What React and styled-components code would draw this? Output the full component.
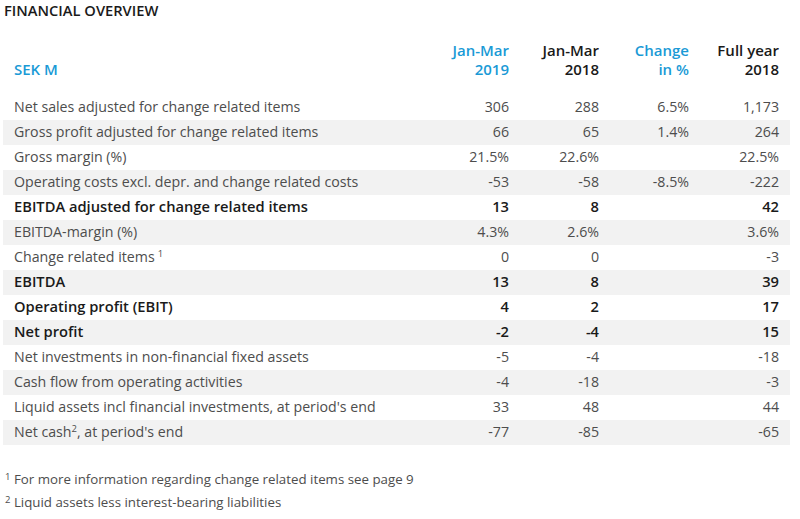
import styled, { createGlobalStyle } from "styled-components";

const GlobalStyle = createGlobalStyle`
  html, body {
    margin: 0;
    padding: 0;
    background: #ffffff;
  }
  body {
    font-family: "Open Sans", "Liberation Sans", sans-serif;
  }
`;

const rows = [
  { label: "Net sales adjusted for change related items", values: ["306", "288", "6.5%", "1,173"] },
  { label: "Gross profit adjusted for change related items", values: ["66", "65", "1.4%", "264"] },
  { label: "Gross margin (%)", values: ["21.5%", "22.6%", "", "22.5%"] },
  { label: "Operating costs excl. depr. and change related costs", values: ["-53", "-58", "-8.5%", "-222"] },
  { label: "EBITDA adjusted for change related items", values: ["13", "8", "", "42"], bold: true },
  { label: "EBITDA-margin (%)", values: ["4.3%", "2.6%", "", "3.6%"] },
  { label: "Change related items", note: "1", spaced: true, values: ["0", "0", "", "-3"] },
  { label: "EBITDA", values: ["13", "8", "", "39"], bold: true },
  { label: "Operating profit (EBIT)", values: ["4", "2", "", "17"], bold: true },
  { label: "Net profit", values: ["-2", "-4", "", "15"], bold: true },
  { label: "Net investments in non-financial fixed assets", values: ["-5", "-4", "", "-18"] },
  { label: "Cash flow from operating activities", values: ["-4", "-18", "", "-3"] },
  { label: "Liquid assets incl financial investments, at period's end", values: ["33", "48", "", "44"] },
  { label: "Net cash", note: "2", rest: ", at period's end", values: ["-77", "-85", "", "-65"] },
];

const headers = [
  { top: "Jan-Mar", bottom: "2019", blue: true },
  { top: "Jan-Mar", bottom: "2018" },
  { top: "Change", bottom: "in %", blue: true },
  { top: "Full year", bottom: "2018" },
];

export default function App() {
  return (
    <>
      <GlobalStyle />
      <Page>
        <Title>FINANCIAL OVERVIEW</Title>
        <Table>
          <colgroup>
            <col style={{ width: 427 }} />
            <col style={{ width: 90 }} />
            <col style={{ width: 90 }} />
            <col style={{ width: 90 }} />
            <col style={{ width: 90 }} />
          </colgroup>
          <thead>
            <tr>
              <HeadLabel>SEK M</HeadLabel>
              {headers.map((h, i) => (
                <HeadCell key={i} $blue={h.blue}>
                  {h.top}
                  <br />
                  {h.bottom}
                </HeadCell>
              ))}
            </tr>
          </thead>
          <tbody>
            {rows.map((r, i) => (
              <Row key={i} $shaded={i % 2 === 1}>
                <Label $bold={r.bold}>
                  {r.label}
                  {r.note && <Sup $spaced={r.spaced}>{r.note}</Sup>}
                  {r.rest}
                </Label>
                {r.values.map((v, j) => (
                  <Value key={j} $bold={r.bold}>
                    {v}
                  </Value>
                ))}
              </Row>
            ))}
          </tbody>
        </Table>
        <Notes>
          <Note>
            <NoteMark>1</NoteMark> For more information regarding change related items see page 9
          </Note>
          <Note>
            <NoteMark>2</NoteMark> Liquid assets less interest-bearing liabilities
          </Note>
        </Notes>
      </Page>
    </>
  );
}

const Page = styled.div`
  width: 800px;
  height: 519px;
  padding: 0 0 0 3px;
  box-sizing: border-box;
  color: #4d4d4d;
`;

const Title = styled.div`
  font-size: 14.7px;
  font-weight: 600;
  color: #1a1a1a;
  line-height: 20px;
  padding: 0 0 0 1px;
`;

const Table = styled.table`
  border-collapse: collapse;
  table-layout: fixed;
  width: 787px;
  margin-top: 21px;
  font-size: 14.2px;
`;

const HeadLabel = styled.th`
  text-align: left;
  vertical-align: bottom;
  font-size: 15px;
  font-weight: 600;
  color: #1a9ad6;
  padding: 0 0 16px 11px;
  line-height: 19px;
`;

const HeadCell = styled.th`
  text-align: right;
  vertical-align: bottom;
  font-size: 15px;
  font-weight: 600;
  color: ${(p) => (p.$blue ? "#1a9ad6" : "#1a1a1a")};
  padding: 0 11px 16px 0;
  line-height: 19px;
`;

const Row = styled.tr`
  height: 25px;
  background: ${(p) => (p.$shaded ? "#f2f2f2" : "transparent")};
`;

const Label = styled.td`
  padding: 0 0 2px 11px;
  height: 23px;
  line-height: 23px;
  white-space: nowrap;
  font-size: ${(p) => (p.$bold ? "14.7px" : "14.2px")};
  font-weight: ${(p) => (p.$bold ? 600 : 400)};
  color: ${(p) => (p.$bold ? "#1a1a1a" : "#4d4d4d")};
`;

const Value = styled.td`
  padding: 0 11px 2px 0;
  height: 23px;
  line-height: 23px;
  text-align: right;
  font-size: ${(p) => (p.$bold ? "14.7px" : "14.2px")};
  font-weight: ${(p) => (p.$bold ? 600 : 400)};
  color: ${(p) => (p.$bold ? "#1a1a1a" : "#4d4d4d")};
`;

const Sup = styled.sup`
  font-size: 9.5px;
  line-height: 0;
  vertical-align: 5px;
  margin-left: ${(p) => (p.$spaced ? "3px" : "0")};
`;

const Notes = styled.div`
  margin-top: 23px;
  padding-left: 2px;
  font-size: 13.3px;
  color: #4d4d4d;
`;

const Note = styled.div`
  line-height: 23px;
`;

const NoteMark = styled.sup`
  font-size: 9.5px;
  line-height: 0;
  vertical-align: 4px;
`;
